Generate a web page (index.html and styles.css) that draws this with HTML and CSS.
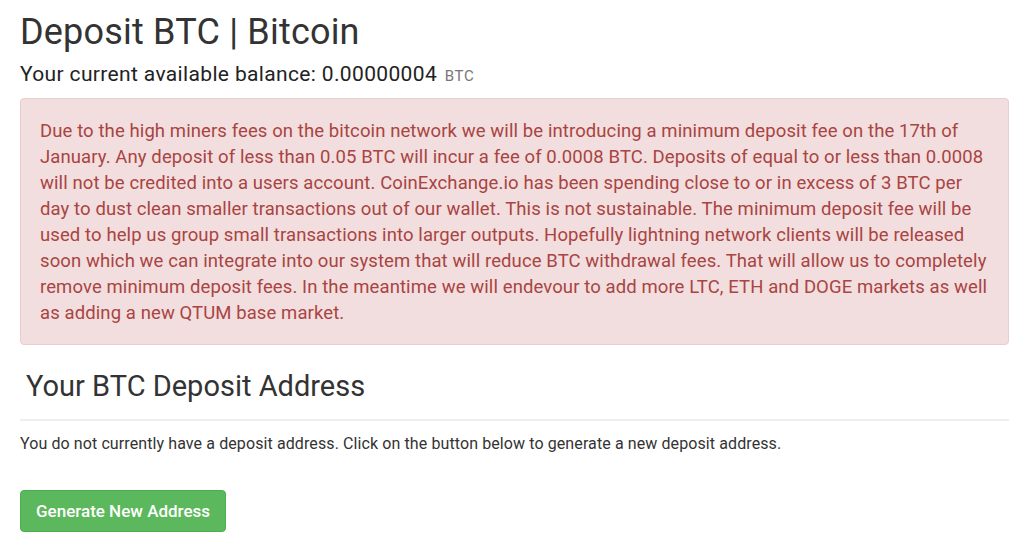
FILE: index.html
```html
<!DOCTYPE html>
<html>
<head>
<meta charset="utf-8">
<link rel="stylesheet" href="styles.css">
</head>
<body>
<div class="page">
  <h1 class="title">Deposit BTC | Bitcoin</h1>
  <div class="balance">Your current available balance: 0.00000004 <span class="unit">BTC</span></div>
  <div class="alert">Due to the high miners fees on the bitcoin network we will be introducing a minimum deposit fee on the 17th of<br>January. Any deposit of less than 0.05 BTC will incur a fee of 0.0008 BTC. Deposits of equal to or less than 0.0008<br>will not be credited into a users account. CoinExchange.io has been spending close to or in excess of 3 BTC per<br>day to dust clean smaller transactions out of our wallet. This is not sustainable. The minimum deposit fee will be<br>used to help us group small transactions into larger outputs. Hopefully lightning network clients will be released<br>soon which we can integrate into our system that will reduce BTC withdrawal fees. That will allow us to completely<br>remove minimum deposit fees. In the meantime we will endevour to add more LTC, ETH and DOGE markets as well<br>as adding a new QTUM base market.</div>
  <h3 class="section-title">Your BTC Deposit Address</h3>
  <hr class="rule">
  <p class="note">You do not currently have a deposit address. Click on the button below to generate a new deposit address.</p>
  <button class="btn-green">Generate New Address</button>
</div>
</body>
</html>
```
FILE: styles.css
```css
html, body {
  margin: 0;
  padding: 0;
  background: #fff;
}
body {
  font-family: Roboto, "Helvetica Neue", Arial, sans-serif;
  color: #333;
}
.page {
  padding: 0 15px 0 20px;
}
.title {
  font-size: 36px;
  font-weight: 400;
  line-height: 40px;
  letter-spacing: 0.2px;
  margin: 12px 0 0 0;
  color: #333;
}
.balance {
  font-size: 21px;
  line-height: 24px;
  letter-spacing: 0.35px;
  margin-top: 10px;
  color: #222;
}
.unit {
  font-size: 15px;
  color: #777;
  letter-spacing: 0.8px;
  margin-left: 2px;
}
.alert {
  margin-top: 10px;
  background: #f2dede;
  border: 1px solid #ebccd1;
  border-radius: 4px;
  color: #a94442;
  font-size: 18.5px;
  line-height: 26px;
  letter-spacing: 0.1px;
  padding: 19px 8px 18px 19px;
}
.section-title {
  font-size: 29px;
  font-weight: 400;
  line-height: 34px;
  margin: 24px 0 0 6px;
  color: #333;
}
.rule {
  border: 0;
  border-top: 2px solid #eee;
  margin: 16px 0 0 0;
}
.note {
  font-size: 16px;
  line-height: 22px;
  letter-spacing: 0.1px;
  margin: 12px 0 0 0;
  color: #333;
}
.btn-green {
  margin-top: 35px;
  display: inline-block;
  background: #5cb85c;
  border: 1px solid #4cae4c;
  border-radius: 4px;
  color: #fff;
  font-family: Roboto, "Helvetica Neue", Arial, sans-serif;
  font-size: 17px;
  font-weight: 500;
  line-height: 22px;
  padding: 9px 15px;
}
```
